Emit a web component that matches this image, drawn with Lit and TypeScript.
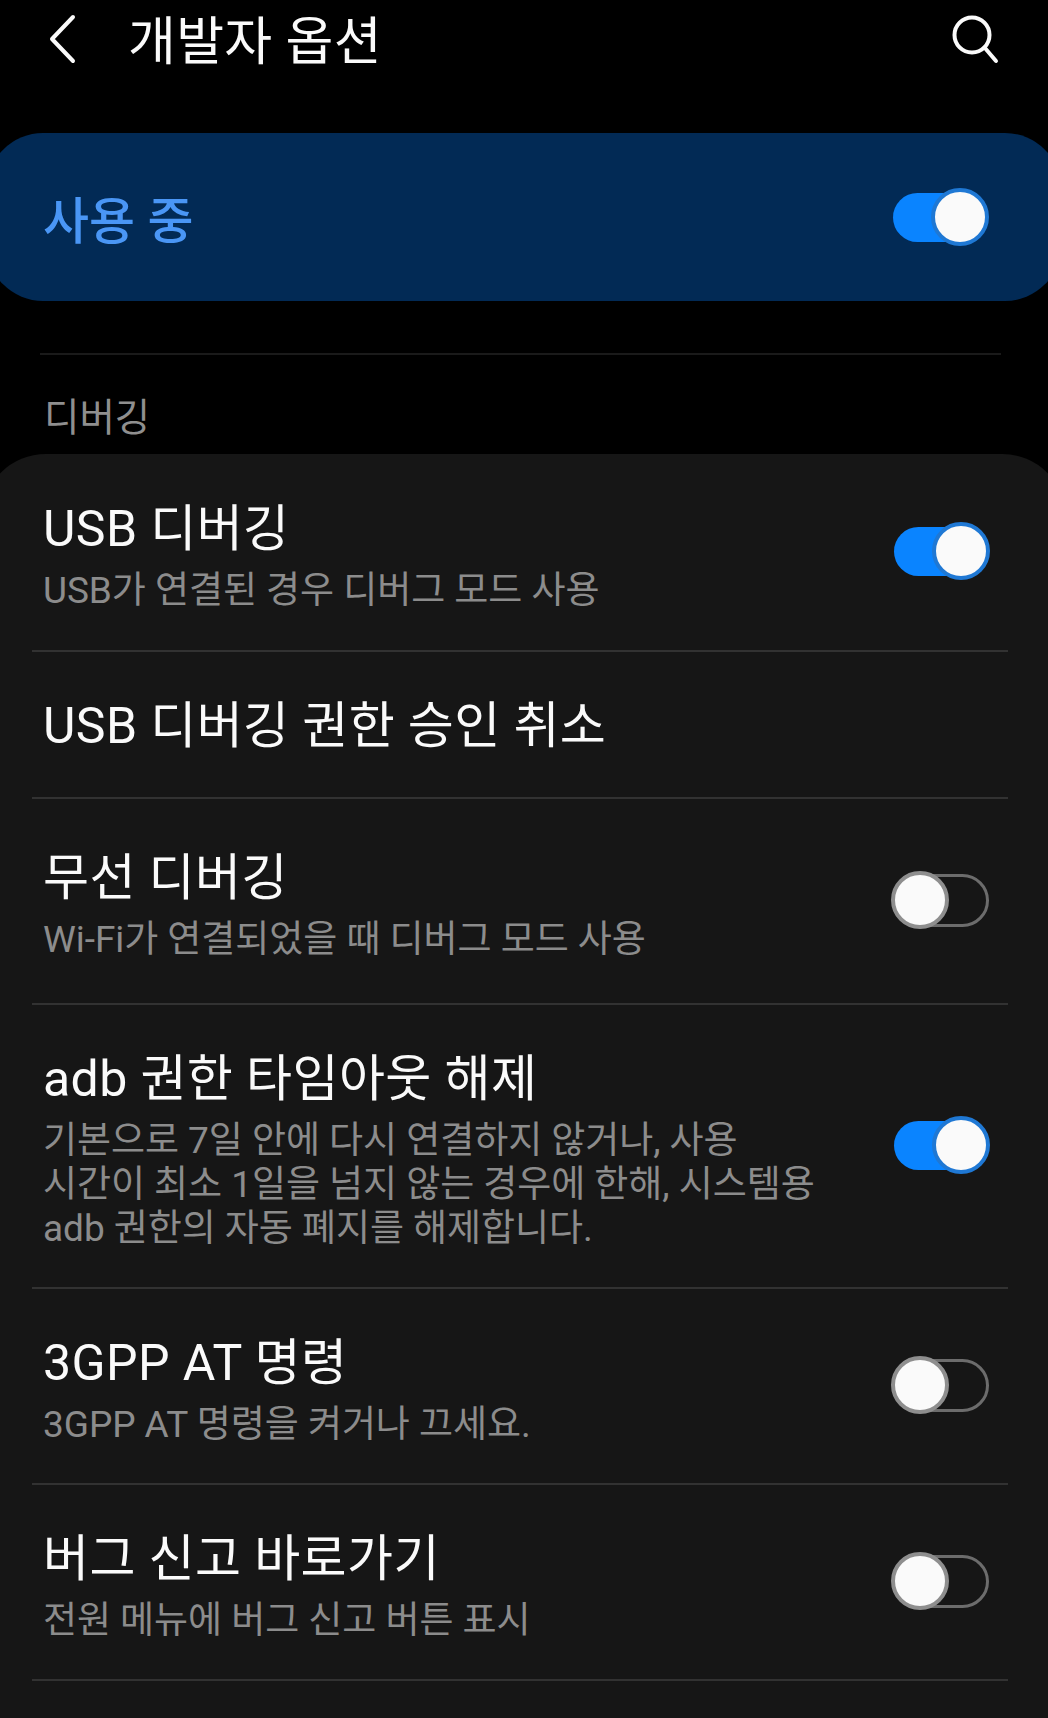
import { LitElement, html, css, nothing } from "lit";
import { customElement, property } from "lit/decorators.js";

@customElement("dev-toggle")
export class DevToggle extends LitElement {
  static override styles = css`
    :host {
      display: block;
      flex: none;
      position: relative;
      width: 99px;
      height: 58px;
    }
    .track {
      position: absolute;
      left: 1px;
      right: 1px;
      top: 3px;
      bottom: 2px;
      box-sizing: border-box;
      border-radius: 27px;
      border: 3px solid #6c6c6c;
    }
    .thumb {
      position: absolute;
      left: 0;
      top: 0;
      width: 58px;
      height: 58px;
      box-sizing: border-box;
      border-radius: 50%;
      background: #fafafa;
      border: 4px solid #8e8e8e;
    }
    :host([on]) .track {
      left: 3px;
      right: 8px;
      top: 5px;
      bottom: 4px;
      background: #0a84ff;
      border: none;
    }
    :host([on]) .thumb {
      left: auto;
      right: 0;
      border-color: #1f78d4;
    }
  `;

  @property({ type: Boolean, reflect: true })
  on: boolean = false;

  override render() {
    return html`<div class="track"></div><div class="thumb"></div>`;
  }
}

const rows = [
  { h: 198, title: "USB 디버깅", sub: ["USB가 연결된 경우 디버그 모드 사용"], on: true },
  { h: 147, title: "USB 디버깅 권한 승인 취소" },
  { h: 206, title: "무선 디버깅", sub: ["Wi-Fi가 연결되었을 때 디버그 모드 사용"], on: false },
  {
    h: 284,
    title: "adb 권한 타임아웃 해제",
    sub: [
      "기본으로 7일 안에 다시 연결하지 않거나, 사용",
      "시간이 최소 1일을 넘지 않는 경우에 한해, 시스템용",
      "adb 권한의 자동 폐지를 해제합니다.",
    ],
    on: true,
  },
  { h: 196, title: "3GPP AT 명령", sub: ["3GPP AT 명령을 켜거나 끄세요."], on: false },
  { h: 196, title: "버그 신고 바로가기", sub: ["전원 메뉴에 버그 신고 버튼 표시"], on: false },
];

@customElement("app-root")
export class AppRoot extends LitElement {
  static override styles = css`
    :host {
      display: block;
      width: 1048px;
      height: 1718px;
      overflow: hidden;
      background: #000;
      color: #fafafa;
      font-family: Roboto, "Noto Sans CJK KR", "Noto Sans", sans-serif;
    }

    .header {
      display: flex;
      align-items: center;
      height: 78px;
      padding: 0 48px;
    }
    .header h1 {
      flex: 1;
      margin: 0 0 3px 46px;
      font-size: 52px;
      font-weight: 400;
      letter-spacing: 0.3px;
    }
    .header svg {
      display: block;
      flex: none;
    }

    .banner {
      display: flex;
      align-items: center;
      justify-content: space-between;
      box-sizing: border-box;
      height: 168px;
      margin: 55px -13px 0;
      padding: 0 72px 0 56px;
      border-radius: 56px;
      background: #022a55;
      color: #4a96f5;
      font-size: 50px;
      font-weight: 500;
    }

    .rule {
      height: 2px;
      margin: 52px 47px 0 40px;
      background: #1a1a1a;
    }

    .label {
      box-sizing: border-box;
      height: 99px;
      padding: 36px 44px 0;
      line-height: 54px;
      font-size: 38.5px;
      color: #8f8f8f;
    }

    .card {
      height: 1264px;
      margin: 0 -18px;
      padding: 0 58px 0 50px;
      border-radius: 64px 64px 0 0;
      background: #161616;
    }

    .row {
      display: flex;
      align-items: center;
      justify-content: space-between;
      box-sizing: border-box;
      padding: 0 18px 0 11px;
      border-bottom: 2px solid #323232;
    }
    .row dev-toggle {
      margin-bottom: 2px;
    }
    .text {
      padding-top: 7px;
    }
    .text:only-child {
      padding-top: 2px;
    }
    .title {
      font-size: 50px;
      line-height: 60px;
      letter-spacing: 0.4px;
    }
    .sub {
      margin-top: 10px;
      font-size: 37px;
      line-height: 44px;
      letter-spacing: -0.05px;
      color: #8c8c8c;
    }
  `;

  override render() {
    return html`
      <div class="header">
        <svg width="34" height="50" viewBox="0 0 34 50" fill="none" stroke="#fafafa" stroke-width="4" stroke-linecap="round" stroke-linejoin="round">
          <path d="M25 3 L4 25 L25 47" />
        </svg>
        <h1>개발자 옵션</h1>
        <svg width="50" height="50" viewBox="0 0 50 50" fill="none" stroke="#fafafa" stroke-width="4" stroke-linecap="round">
          <circle cx="22" cy="21" r="17.5" />
          <path d="M34.5 33.5 L46 47" />
        </svg>
      </div>

      <div class="banner">
        <span>사용 중</span>
        <dev-toggle on></dev-toggle>
      </div>

      <div class="rule"></div>
      <div class="label">디버깅</div>

      <div class="card">
        ${rows.map(
          (r) => html`
            <div class="row" style="height: ${r.h}px">
              <div class="text">
                <div class="title">${r.title}</div>
                ${r.sub
                  ? html`<div class="sub">${r.sub.map((l) => html`<div>${l}</div>`)}</div>`
                  : nothing}
              </div>
              ${r.on === undefined ? nothing : html`<dev-toggle ?on=${r.on}></dev-toggle>`}
            </div>
          `
        )}
      </div>
    `;
  }
}
